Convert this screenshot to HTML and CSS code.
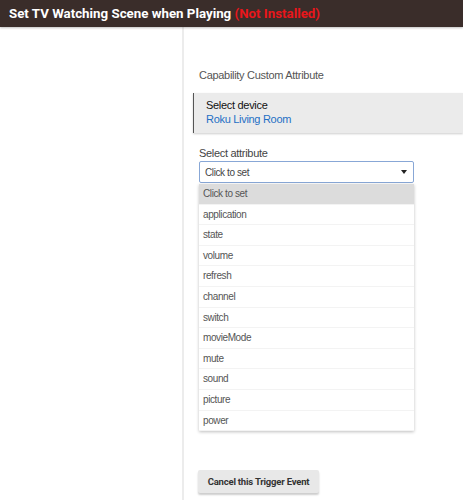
FILE: index.html
```html
<!DOCTYPE html>
<html>
<head>
    <title>Set TV Watching Scene when Playing</title>
    <meta name="viewport" content="width=device-width, initial-scale=1.0">
    <link rel="stylesheet" href="styles.css">
</head>
<body>
    <div id="top-bar">
        <h1>Set TV Watching Scene when Playing <span class="not-installed">(Not Installed)</span></h1>
    </div>

    <div id="page">
        <div id="side"></div>

        <div id="main">
            <div class="cap-title">Capability Custom Attribute</div>

            <div class="device-box">
                <div class="device-label">Select device</div>
                <div class="device-name">Roku Living Room</div>
            </div>

            <div class="attr-label">Select attribute</div>
            <div class="attr-select">
                <div class="attr-current">
                    <span>Click to set</span>
                    <span class="caret"></span>
                </div>
                <div class="attr-list">
                    <div class="attr-item active">Click to set</div>
                    <div class="attr-item">application</div>
                    <div class="attr-item">state</div>
                    <div class="attr-item">volume</div>
                    <div class="attr-item">refresh</div>
                    <div class="attr-item">channel</div>
                    <div class="attr-item">switch</div>
                    <div class="attr-item">movieMode</div>
                    <div class="attr-item">mute</div>
                    <div class="attr-item">sound</div>
                    <div class="attr-item">picture</div>
                    <div class="attr-item">power</div>
                </div>
            </div>

            <button class="cancel-btn">Cancel this Trigger Event</button>
        </div>
    </div>
</body>
</html>
```

FILE: styles.css
```css
* {
    box-sizing: border-box;
    margin: 0;
    padding: 0;
}

body {
    font-family: "Liberation Sans", Arial, sans-serif;
    background: #fff;
    height: 500px;
    overflow: hidden;
}

#top-bar {
    height: 27px;
    background: #3a2d2a;
    padding: 0 9px;
    box-shadow: 0 1px 2px rgba(0, 0, 0, 0.25);
    position: relative;
}

#top-bar h1 {
    font-family: Roboto, sans-serif;
    font-weight: bold;
    font-size: 13.3px;
    line-height: 28px;
    color: #fff;
    white-space: nowrap;
}

.not-installed {
    color: #e8161b;
}

#page {
    display: flex;
    height: 473px;
}

#side {
    width: 184px;
    border-right: 2px solid #ececec;
}

#main {
    flex-grow: 1;
    padding: 41px 0 0 9px;
}

.cap-title {
    font-size: 11px;
    letter-spacing: -0.3px;
    color: #555;
    padding-left: 6px;
    height: 18px;
    line-height: 14px;
}

.device-box {
    margin-top: 7px;
    height: 40px;
    background: #ebebeb;
    border-left: 1px solid #555;
    padding: 5px 12px;
    font-size: 11px;
    letter-spacing: -0.3px;
    line-height: 14px;
    box-shadow: 0 1px 2px rgba(0, 0, 0, 0.2);
}

.device-label {
    color: #111;
}

.device-name {
    color: #1f6fc5;
}

.attr-label {
    margin-top: 13px;
    padding-left: 6px;
    font-size: 11px;
    letter-spacing: -0.3px;
    color: #444;
    line-height: 14px;
}

.attr-select {
    margin: 1px 0 0 6px;
    width: 215px;
}

.attr-current {
    height: 22px;
    border: 1px solid #88a7d6;
    border-radius: 2px;
    display: flex;
    align-items: center;
    justify-content: space-between;
    padding: 0 6px 0 5px;
    font-size: 10px;
    letter-spacing: -0.4px;
    color: #444;
}

.caret {
    width: 0;
    height: 0;
    border-left: 3.5px solid transparent;
    border-right: 3.5px solid transparent;
    border-top: 4px solid #222;
}

.attr-list {
    margin-top: 1px;
    box-shadow: 0 1px 3px rgba(0, 0, 0, 0.25);
    background: #fff;
}

.attr-item {
    height: 20.6px;
    line-height: 20px;
    padding-left: 4px;
    font-size: 10px;
    letter-spacing: -0.4px;
    color: #555;
    border-bottom: 1px solid #f3f3f3;
}

.attr-item.active {
    background: #dcdcdc;
}

.cancel-btn {
    margin-top: 39px;
    margin-left: 5px;
    height: 23px;
    width: 121px;
    font-family: Roboto, sans-serif;
    font-weight: bold;
    font-size: 9.5px;
    letter-spacing: -0.2px;
    color: #333;
    background: #e8e8e8;
    border: none;
    border-radius: 2px;
    box-shadow: 0 2px 2px rgba(0, 0, 0, 0.2);
}
```
